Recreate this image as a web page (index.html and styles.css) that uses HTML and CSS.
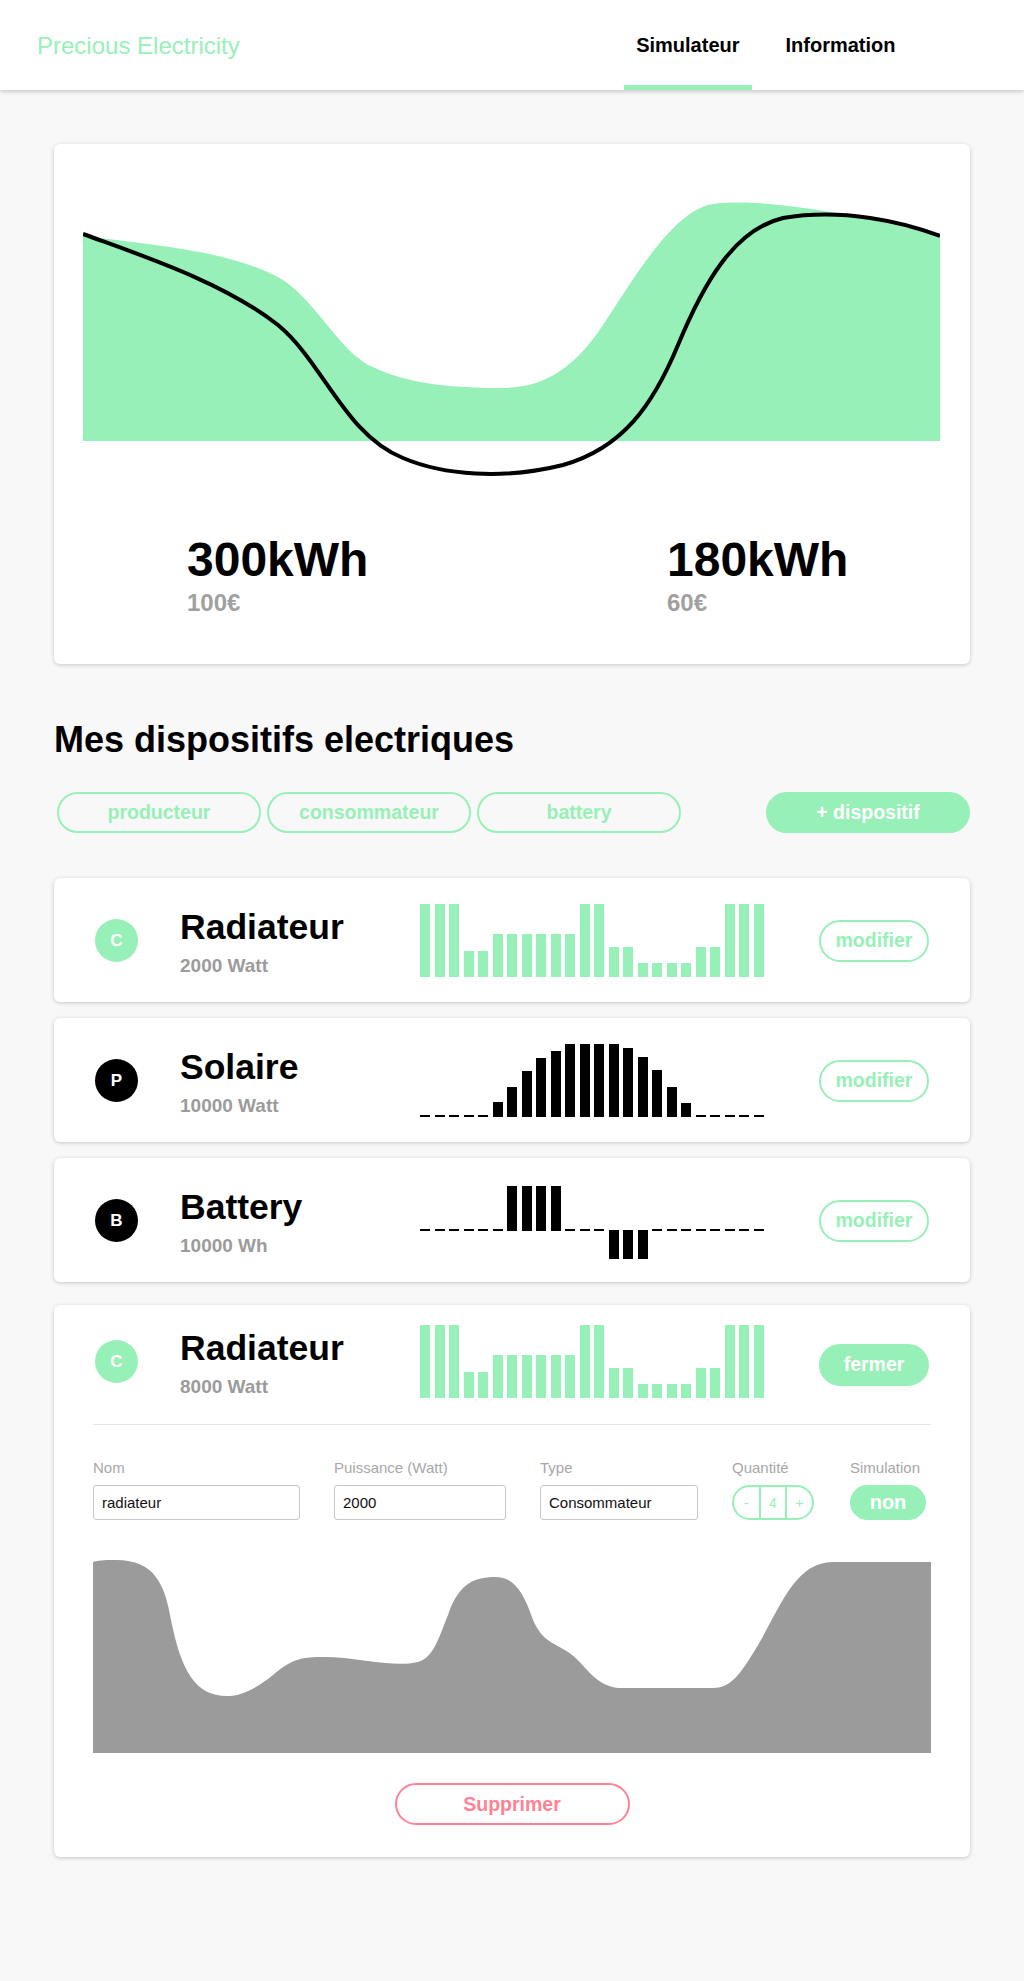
FILE: index.html
```html
<!DOCTYPE html>
<html lang="fr">
<head>
<meta charset="utf-8">
<title>Precious Electricity</title>
<link rel="stylesheet" href="styles.css">
</head>
<body>
<header class="topbar">
  <div class="logo">Precious Electricity</div>
  <nav class="tabs">
    <a class="tab active" href="#">Simulateur</a>
    <a class="tab" href="#">Information</a>
  </nav>
</header>

<main class="page">
  <section class="card summary">
    <svg class="summary-chart" viewBox="0 0 857 300" preserveAspectRatio="none">
      <path class="area" d="M0,46 C60,54 150,60 200,90 C236,114 258,165 292,178 C322,192 360,198 418,198 C460,198 490,180 520,135 C550,90 590,20 630,14 C670,8 760,20 857,46 V251 H0 Z"/>
      <path class="line" d="M0,44 C60,66 140,92 195,135 C240,172 262,245 320,268 C360,285 420,290 480,275 C540,258 570,215 595,155 C620,95 650,40 700,28 C760,18 820,32 857,46"/>
    </svg>
    <div class="stats">
      <div class="stat">
        <div class="stat-kwh">300kWh</div>
        <div class="stat-eur">100€</div>
      </div>
      <div class="stat">
        <div class="stat-kwh">180kWh</div>
        <div class="stat-eur">60€</div>
      </div>
    </div>
  </section>

  <h2 class="section-title">Mes dispositifs electriques</h2>

  <div class="filters">
    <button class="pill">producteur</button>
    <button class="pill">consommateur</button>
    <button class="pill">battery</button>
    <button class="pill add">+ dispositif</button>
  </div>

  <div class="devices">
    <article class="card device">
      <div class="device-row">
        <div class="badge c">C</div>
        <div class="dev-info">
          <div class="dev-name">Radiateur</div>
          <div class="dev-power">2000 Watt</div>
        </div>
        <div class="bars green">
          <span class="bar" style="height:73px"></span><span class="bar" style="height:73px"></span><span class="bar" style="height:73px"></span><span class="bar" style="height:26px"></span><span class="bar" style="height:26px"></span><span class="bar" style="height:43px"></span><span class="bar" style="height:43px"></span><span class="bar" style="height:43px"></span><span class="bar" style="height:43px"></span><span class="bar" style="height:43px"></span><span class="bar" style="height:43px"></span><span class="bar" style="height:73px"></span><span class="bar" style="height:73px"></span><span class="bar" style="height:30px"></span><span class="bar" style="height:30px"></span><span class="bar" style="height:14px"></span><span class="bar" style="height:14px"></span><span class="bar" style="height:14px"></span><span class="bar" style="height:14px"></span><span class="bar" style="height:30px"></span><span class="bar" style="height:30px"></span><span class="bar" style="height:73px"></span><span class="bar" style="height:73px"></span><span class="bar" style="height:73px"></span>
        </div>
        <button class="btn outline">modifier</button>
      </div>
    </article>

    <article class="card device">
      <div class="device-row">
        <div class="badge dark">P</div>
        <div class="dev-info">
          <div class="dev-name">Solaire</div>
          <div class="dev-power">10000 Watt</div>
        </div>
        <div class="bars dark">
          <span class="bar" style="height:2px"></span><span class="bar" style="height:2px"></span><span class="bar" style="height:2px"></span><span class="bar" style="height:2px"></span><span class="bar" style="height:2px"></span><span class="bar" style="height:15px"></span><span class="bar" style="height:30px"></span><span class="bar" style="height:46px"></span><span class="bar" style="height:59px"></span><span class="bar" style="height:66px"></span><span class="bar" style="height:73px"></span><span class="bar" style="height:73px"></span><span class="bar" style="height:73px"></span><span class="bar" style="height:73px"></span><span class="bar" style="height:69px"></span><span class="bar" style="height:60px"></span><span class="bar" style="height:47px"></span><span class="bar" style="height:30px"></span><span class="bar" style="height:14px"></span><span class="bar" style="height:2px"></span><span class="bar" style="height:2px"></span><span class="bar" style="height:2px"></span><span class="bar" style="height:2px"></span><span class="bar" style="height:2px"></span>
        </div>
        <button class="btn outline">modifier</button>
      </div>
    </article>

    <article class="card device">
      <div class="device-row">
        <div class="badge dark">B</div>
        <div class="dev-info">
          <div class="dev-name">Battery</div>
          <div class="dev-power">10000 Wh</div>
        </div>
        <div class="bars dark signed">
          <span class="bar" style="margin-top:45px;height:2px"></span><span class="bar" style="margin-top:45px;height:2px"></span><span class="bar" style="margin-top:45px;height:2px"></span><span class="bar" style="margin-top:45px;height:2px"></span><span class="bar" style="margin-top:45px;height:2px"></span><span class="bar" style="margin-top:45px;height:2px"></span><span class="bar" style="margin-top:2px;height:45px"></span><span class="bar" style="margin-top:2px;height:45px"></span><span class="bar" style="margin-top:2px;height:45px"></span><span class="bar" style="margin-top:2px;height:45px"></span><span class="bar" style="margin-top:45px;height:2px"></span><span class="bar" style="margin-top:45px;height:2px"></span><span class="bar" style="margin-top:45px;height:2px"></span><span class="bar" style="margin-top:46px;height:29px"></span><span class="bar" style="margin-top:46px;height:29px"></span><span class="bar" style="margin-top:46px;height:29px"></span><span class="bar" style="margin-top:45px;height:2px"></span><span class="bar" style="margin-top:45px;height:2px"></span><span class="bar" style="margin-top:45px;height:2px"></span><span class="bar" style="margin-top:45px;height:2px"></span><span class="bar" style="margin-top:45px;height:2px"></span><span class="bar" style="margin-top:45px;height:2px"></span><span class="bar" style="margin-top:45px;height:2px"></span><span class="bar" style="margin-top:45px;height:2px"></span>
        </div>
        <button class="btn outline">modifier</button>
      </div>
    </article>

    <article class="card device open">
      <div class="device-row">
        <div class="badge c">C</div>
        <div class="dev-info">
          <div class="dev-name">Radiateur</div>
          <div class="dev-power">8000 Watt</div>
        </div>
        <div class="bars green">
          <span class="bar" style="height:73px"></span><span class="bar" style="height:73px"></span><span class="bar" style="height:73px"></span><span class="bar" style="height:26px"></span><span class="bar" style="height:26px"></span><span class="bar" style="height:43px"></span><span class="bar" style="height:43px"></span><span class="bar" style="height:43px"></span><span class="bar" style="height:43px"></span><span class="bar" style="height:43px"></span><span class="bar" style="height:43px"></span><span class="bar" style="height:73px"></span><span class="bar" style="height:73px"></span><span class="bar" style="height:30px"></span><span class="bar" style="height:30px"></span><span class="bar" style="height:14px"></span><span class="bar" style="height:14px"></span><span class="bar" style="height:14px"></span><span class="bar" style="height:14px"></span><span class="bar" style="height:30px"></span><span class="bar" style="height:30px"></span><span class="bar" style="height:73px"></span><span class="bar" style="height:73px"></span><span class="bar" style="height:73px"></span>
        </div>
        <button class="btn filled">fermer</button>
      </div>
      <div class="divider"></div>
      <div class="dev-body">
        <div class="form">
          <div class="field f-name">
            <label>Nom</label>
            <input class="text-input" type="text" value="radiateur">
          </div>
          <div class="field f-power">
            <label>Puissance (Watt)</label>
            <input class="text-input" type="text" value="2000">
          </div>
          <div class="field f-type">
            <label>Type</label>
            <input class="text-input" type="text" value="Consommateur">
          </div>
          <div class="field f-qty">
            <label>Quantité</label>
            <div class="stepper"><span>-</span><span>4</span><span>+</span></div>
          </div>
          <div class="field f-sim">
            <label>Simulation</label>
            <button class="toggle">non</button>
          </div>
        </div>
        <svg class="profile-chart" viewBox="0 0 838 193" preserveAspectRatio="none">
          <path d="M0,2 C8,0 14,0 23,0 C62,0 72,25 78,60 C88,110 102,136 134,136 C150,136 165,127 180,115 C200,98 210,97 231,97 C265,97 300,108 325,102 C340,98 345,80 355,55 C365,25 380,17 402,17 C420,17 430,30 440,60 C450,82 460,82 475,92 C492,103 500,125 525,128 L620,128 C640,128 650,110 668,80 C690,40 705,2 740,2 L838,2 L838,193 L0,193 Z"/>
        </svg>
        <button class="delete">Supprimer</button>
      </div>
    </article>
  </div>
</main>
</body>
</html>
```

FILE: styles.css
```css
* { box-sizing: border-box; }

body {
  margin: 0;
  background: #f8f8f8;
  font-family: "Liberation Sans", Arial, Helvetica, sans-serif;
  color: #000;
}

/* ---------- header ---------- */
.topbar {
  position: relative;
  z-index: 1;
  height: 90px;
  background: #fff;
  box-shadow: 0 2px 4px rgba(0, 0, 0, 0.18);
  display: flex;
  align-items: center;
  justify-content: space-between;
  padding: 0 116px 0 37px;
}

.logo {
  font-size: 24px;
  color: #97f0b7;
  padding-top: 2px;
}

.tabs {
  display: flex;
  gap: 21px;
  align-self: stretch;
}

.tab {
  display: flex;
  align-items: center;
  height: 90px;
  padding: 5px 12.5px 0;
  border-bottom: 5px solid transparent;
  font-size: 20px;
  font-weight: bold;
  color: #000;
  text-decoration: none;
}

.tab.active { border-bottom-color: #97f0b7; }

/* ---------- page ---------- */
.page {
  width: 916px;
  margin: 54px auto 0;
  padding-bottom: 100px;
}

.card {
  background: #fff;
  border-radius: 6px;
  box-shadow: 0 1px 4px rgba(0, 0, 0, 0.2);
}

/* summary */
.summary { padding: 46px 30px 49px 29px; }

.summary-chart {
  display: block;
  width: 857px;
  height: 300px;
}

.summary-chart .area { fill: #97f0b7; }
.summary-chart .line { fill: none; stroke: #000; stroke-width: 4; }

.stats {
  display: grid;
  grid-template-columns: 480px 1fr;
  padding-left: 104px;
  margin-top: 46px;
}

.stat-kwh {
  font-size: 48px;
  font-weight: bold;
  line-height: 1;
}

.stat-eur {
  font-size: 24px;
  font-weight: bold;
  line-height: 1;
  color: #a0a0a0;
  margin-top: 7px;
}

/* section title */
.section-title {
  margin: 58px 0 0;
  font-size: 36px;
  line-height: 1;
  font-weight: bold;
}

/* filters */
.filters {
  display: flex;
  align-items: center;
  margin-top: 34px;
  padding-left: 3px;
}

.pill {
  width: 204px;
  height: 41px;
  border: 2px solid #97f0b7;
  border-radius: 21px;
  background: transparent;
  color: #97f0b7;
  font-family: inherit;
  font-size: 19.5px;
  font-weight: bold;
  display: flex;
  align-items: center;
  justify-content: center;
  padding: 0;
}

.pill + .pill { margin-left: 6px; }

.pill.add {
  margin-left: auto;
  background: #97f0b7;
  color: #fff;
}

/* devices */
.devices {
  margin-top: 45px;
  display: flex;
  flex-direction: column;
  gap: 16px;
}

.device-row {
  display: flex;
  align-items: center;
  padding: 26px 41px 25px;
}

.badge {
  flex: none;
  width: 43px;
  height: 43px;
  border-radius: 50%;
  display: flex;
  align-items: center;
  justify-content: center;
  color: #fff;
  font-size: 17px;
  font-weight: bold;
}

.badge.c { background: #97f0b7; }
.badge.dark { background: #000; }

.dev-info {
  flex: none;
  width: 240px;
  margin-left: 42px;
  margin-top: 4px;
}

.dev-name {
  font-size: 35.5px;
  font-weight: bold;
  line-height: 1;
}

.dev-power {
  margin-top: 11px;
  font-size: 19px;
  font-weight: bold;
  line-height: 1;
  color: #9b9b9b;
}

.bars {
  flex: none;
  width: 344px;
  height: 73px;
  display: flex;
  justify-content: space-between;
  align-items: flex-end;
}

.bars.signed { align-items: flex-start; }

.bar {
  flex: none;
  width: 10px;
}

.bars.green .bar { background: #97f0b7; }
.bars.dark .bar { background: #000; }

.btn {
  margin-left: auto;
  width: 110px;
  height: 42px;
  border-radius: 21px;
  border: 2px solid #97f0b7;
  font-family: inherit;
  font-size: 19.5px;
  font-weight: bold;
  padding: 0;
}

.btn.outline { background: #fff; color: #97f0b7; }
.btn.filled { background: #97f0b7; color: #fff; margin-top: 6px; }

/* open device */
.device.open { margin-top: 7px; }
.device.open .device-row { padding-top: 20px; padding-bottom: 26px; }

.divider {
  height: 1px;
  margin: 0 39px;
  background: #e6e6e6;
}

.dev-body { padding: 35px 39px 32px; }

.form {
  display: flex;
  gap: 34px;
}

.field label {
  display: block;
  font-size: 15px;
  line-height: 1;
  color: #a8a8a8;
  margin-bottom: 10px;
}

.f-name { width: 207px; }
.f-power { width: 172px; }
.f-type { width: 158px; }
.f-qty { width: 82px; }
.f-sim { width: 76px; margin-left: 2px; }

.text-input {
  display: block;
  width: 100%;
  height: 35px;
  border: 1px solid #c8c8c8;
  border-radius: 3px;
  padding: 0 8px;
  font-family: inherit;
  font-size: 15px;
  color: #111;
  background: #fff;
}

.stepper {
  display: flex;
  width: 82px;
  height: 35px;
  border: 2px solid #97f0b7;
  border-radius: 18px;
  overflow: hidden;
}

.stepper span {
  flex: 1;
  display: flex;
  align-items: center;
  justify-content: center;
  font-size: 14px;
  color: #97f0b7;
}

.stepper span + span { border-left: 2px solid #97f0b7; }

.toggle {
  width: 76px;
  height: 35px;
  border: none;
  border-radius: 18px;
  background: #97f0b7;
  color: #fff;
  font-family: inherit;
  font-size: 20px;
  font-weight: bold;
  padding: 0;
}

.profile-chart {
  display: block;
  width: 838px;
  height: 193px;
  margin-top: 40px;
  fill: #9b9b9b;
}

.delete {
  display: block;
  margin: 30px auto 0;
  width: 235px;
  height: 42px;
  border: 2px solid #ff8294;
  border-radius: 21px;
  background: #fff;
  color: #ff8294;
  font-family: inherit;
  font-size: 19.5px;
  font-weight: bold;
  padding: 0;
}
```
